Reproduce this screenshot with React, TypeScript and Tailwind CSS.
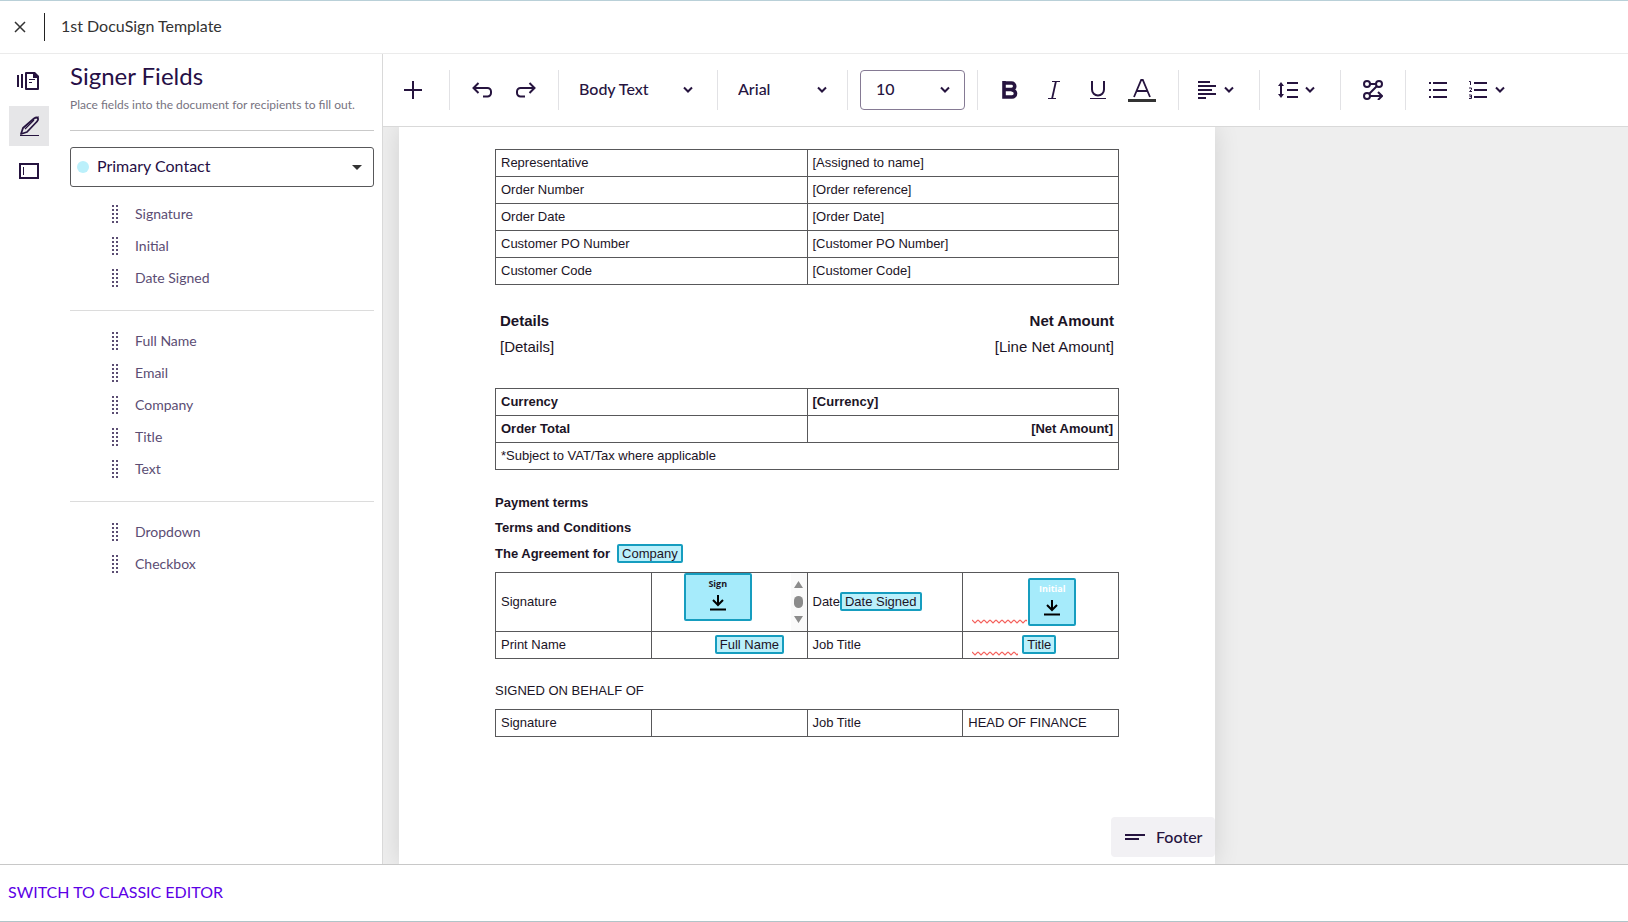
import clsx from "clsx";
import type { ReactNode } from "react";

const FIELD_GROUPS = [
  ["Signature", "Initial", "Date Signed"],
  ["Full Name", "Email", "Company", "Title", "Text"],
  ["Dropdown", "Checkbox"],
];

const ORDER_ROWS = [
  ["Representative", "[Assigned to name]"],
  ["Order Number", "[Order reference]"],
  ["Order Date", "[Order Date]"],
  ["Customer PO Number", "[Customer PO Number]"],
  ["Customer Code", "[Customer Code]"],
];

const CELL = "border border-[#58585a] px-[5px] py-0";

export default function App() {
  return (
    <div className="flex h-screen flex-col overflow-hidden border-t border-b border-t-[#b9d0d8] border-b-[#b0c4c8] bg-white font-['Lato',sans-serif] text-[#260559]">
      <Header />
      <div className="flex min-h-0 flex-1">
        <SideRail />
        <FieldsPanel />
        <main className="flex min-w-0 flex-1 flex-col border-l border-[#d9d9d9]">
          <Toolbar />
          <DocumentArea />
        </main>
      </div>
      <footer className="flex h-[57px] shrink-0 items-center border-t border-[#c8c8c8] px-2 pb-0.5">
        <a href="#classic" className="text-base text-[#5c00e6]">
          SWITCH TO CLASSIC EDITOR
        </a>
      </footer>
    </div>
  );
}

function Header() {
  return (
    <header className="flex h-[53px] shrink-0 items-center border-b border-[#ebebeb] text-[#333]">
      <button aria-label="Close" className="flex h-10 w-10 items-center justify-center">
        <svg width="12" height="12" viewBox="0 0 12 12" fill="none" stroke="currentColor" strokeWidth="1.5">
          <path d="M1 1l10 10M11 1L1 11" />
        </svg>
      </button>
      <div className="ml-1 h-7 w-px bg-[#222]" />
      <h1 className="ml-4 pb-0.5 text-base">1st DocuSign Template</h1>
    </header>
  );
}

function RailButton({ label, active = false, children }: { label: string; active?: boolean; children: ReactNode }) {
  return (
    <button
      aria-label={label}
      className={clsx("flex h-10 w-10 items-center justify-center", active && "bg-[#e6e6e8]")}
    >
      {children}
    </button>
  );
}

function SideRail() {
  return (
    <nav className="flex w-[58px] shrink-0 flex-col gap-[5px] pt-[7px] pl-[9px] text-[#26143f]">
      <RailButton label="Documents">
        <svg width="24" height="20" viewBox="0 0 24 20" fill="none" stroke="currentColor">
          <path d="M1 4v12M5 3v14" strokeWidth="2" />
          <path d="M18 2H9v16h12V6" strokeWidth="2" strokeLinejoin="round" />
          <path d="M16 1h2l4 4v2h-6z" fill="currentColor" stroke="none" />
          <path d="M12 8.500h6M12 11.500h3" />
        </svg>
      </RailButton>
      <RailButton label="Signer fields" active>
        <svg width="24" height="24" viewBox="0 0 24 24" fill="none" stroke="currentColor" strokeWidth="2">
          <path d="M4 20l2-6L17 4.500q3-2 4 0q.6 1.600-1 3L10 18z" strokeWidth="1.800" strokeLinejoin="round" />
          <path d="M8 15l9-9M20 4.500l1.500-2" strokeWidth="1.200" />
          <path d="M3 21.500h19" strokeWidth="1" />
        </svg>
      </RailButton>
      <RailButton label="Form fields">
        <svg width="20" height="16" viewBox="0 0 20 16" fill="none" stroke="currentColor">
          <rect x="1" y="1" width="18" height="14" strokeWidth="2" />
          <path d="M4.500 4v8" />
        </svg>
      </RailButton>
    </nav>
  );
}

function FieldsPanel() {
  return (
    <aside className="w-[324px] shrink-0 pr-2 pl-3">
      <h2 className="pt-[7px] text-2xl leading-[30px] text-[#260f46]">Signer Fields</h2>
      <p className="mt-1.5 text-xs leading-4 text-[#77737f]">Place fields into the document for recipients to fill out.</p>
      <hr className="mt-[17px] border-[#c9c9c9]" />
      <div className="relative mt-4">
        <select
          aria-label="Recipient"
          className="h-10 w-full appearance-none rounded-[3px] border border-[#58585a] bg-white pb-0.5 pl-[26px] text-base text-[#260f46]"
        >
          <option>Primary Contact</option>
        </select>
        <span className="pointer-events-none absolute top-[14px] left-[7px] h-3 w-3 rounded-full bg-[#bbf0fb]" />
        <svg className="pointer-events-none absolute top-[18px] right-3" width="10" height="5" viewBox="0 0 10 5">
          <path d="M0 0h10L5 5z" fill="#333" />
        </svg>
      </div>
      {FIELD_GROUPS.map((group, i) => (
        <ul key={i} className={clsx("pb-4", i === 0 ? "pt-[11px]" : "border-t border-[#dcdcdc] pt-[14px]")}>
          {group.map((field) => (
            <li key={field}>
              <button className="flex h-8 w-full items-center gap-[17px] pl-[42px] text-sm text-[#5b4d73]">
                <GripIcon />
                {field}
              </button>
            </li>
          ))}
        </ul>
      ))}
    </aside>
  );
}

function GripIcon() {
  return (
    <svg width="6" height="18" viewBox="0 0 6 18" fill="currentColor" shapeRendering="crispEdges">
      {[0, 4, 8, 12, 16].map((y) => (
        <path key={y} d={`M0 ${y}h2v2h-2zM4 ${y}h2v2h-2z`} />
      ))}
    </svg>
  );
}

function Chevron() {
  return (
    <svg
      className="pointer-events-none shrink-0"
      width="10"
      height="8"
      viewBox="0 0 10 8"
      fill="none"
      stroke="currentColor"
      strokeWidth="2"
    >
      <path d="M1 1.500l4 4 4-4" />
    </svg>
  );
}

function ToolGroup({ className, children }: { className: string; children: ReactNode }) {
  return (
    <div className={clsx("flex h-10 shrink-0 items-center border-r border-[#e2e2e5] last:border-r-0", className)}>
      {children}
    </div>
  );
}

function ToolButton({ label, className, children }: { label: string; className?: string; children: ReactNode }) {
  return (
    <button aria-label={label} className={clsx("flex h-10 items-center", className ?? "w-11 justify-center")}>
      {children}
    </button>
  );
}

function ToolSelect({ label, value, className }: { label: string; value: string; className: string }) {
  return (
    <div className={clsx("relative flex h-10 items-center", className)}>
      <select aria-label={label} className="h-full w-full appearance-none bg-transparent pb-0.5 font-medium">
        <option>{value}</option>
      </select>
      <div className="pointer-events-none absolute right-0 pr-[14px]">
        <Chevron />
      </div>
    </div>
  );
}

function Toolbar() {
  return (
    <div className="flex h-[73px] shrink-0 items-center border-b border-[#d9d9d9] text-base text-[#26143f]">
      <ToolGroup className="w-[67px] pl-2">
        <ToolButton label="Insert">
          <svg width="18" height="18" viewBox="0 0 18 18" stroke="currentColor" strokeWidth="2">
            <path d="M9 0v18M0 9h18" />
          </svg>
        </ToolButton>
      </ToolGroup>
      <ToolGroup className="w-[109px] pl-[10px]">
        <ToolButton label="Undo">
          <UndoIcon />
        </ToolButton>
        <ToolButton label="Redo">
          <UndoIcon className="-scale-x-100" />
        </ToolButton>
      </ToolGroup>
      <ToolGroup className="w-[159px] pl-5">
        <ToolSelect label="Paragraph style" value="Body Text" className="w-[128px]" />
      </ToolGroup>
      <ToolGroup className="w-[130px] pl-5">
        <ToolSelect label="Font" value="Arial" className="w-[103px]" />
      </ToolGroup>
      <ToolGroup className="w-[130px] pl-3">
        <ToolSelect label="Font size" value="10" className="w-[105px] rounded border border-[#857a94] pl-[15px]" />
      </ToolGroup>
      <ToolGroup className="w-[201px] pl-[10px]">
        <ToolButton label="Bold">
          <svg width="16" height="18" viewBox="0 0 16 18" fill="none" stroke="currentColor">
            <path d="M2 2h7.500a3.200 3.200 0 010 6.500H3M9.500 9h.5a3.400 3.400 0 010 7H2V0" strokeWidth="3.600" />
          </svg>
        </ToolButton>
        <ToolButton label="Italic">
          <svg width="12" height="18" viewBox="0 0 12 18" fill="none" stroke="currentColor">
            <path d="M4 .5h8M0 17.500h8" />
            <path d="M8 0L4 18" strokeWidth="1.800" />
          </svg>
        </ToolButton>
        <ToolButton label="Underline">
          <svg width="16" height="18" viewBox="0 0 16 18" fill="none" stroke="currentColor">
            <path d="M2 0v8.500a6 6 0 0012 0V0" strokeWidth="2" />
            <path d="M0 17.500h16" />
          </svg>
        </ToolButton>
        <ToolButton label="Text colour">
          <svg width="28" height="24" viewBox="0 0 28 24" fill="none" stroke="currentColor">
            <path d="M6 19L13.200 2h1.600L22 19M9 13h10" strokeWidth="1.800" />
            <path d="M0 22.500h28" stroke="#333" strokeWidth="3" />
          </svg>
        </ToolButton>
      </ToolGroup>
      <ToolGroup className="w-[81px] pl-[19px]">
        <ToolButton label="Alignment" className="gap-2">
          <svg width="18" height="18" viewBox="0 0 18 18" stroke="currentColor" strokeWidth="2">
            <path d="M0 1h12M0 5h18M0 9h14M0 13h18M0 17h8" />
          </svg>
          <Chevron />
        </ToolButton>
      </ToolGroup>
      <ToolGroup className="w-[81px] pl-[18px]">
        <ToolButton label="Line spacing" className="gap-[7px]">
          <svg width="20" height="18" viewBox="0 0 20 18" fill="none" stroke="currentColor" strokeWidth="2">
            <path d="M9 2h11M9 9h11M9 16h11" />
            <path d="M3 3v12" />
            <path d="M0 5L3 1l3 4zM0 13l3 4 3-4z" fill="currentColor" stroke="none" />
          </svg>
          <Chevron />
        </ToolButton>
      </ToolGroup>
      <ToolGroup className="w-[65px] pl-[10px]">
        <ToolButton label="Conditional rules">
          <svg width="20" height="20" viewBox="0 0 20 20" fill="none" stroke="currentColor" strokeWidth="2">
            <circle cx="4" cy="4" r="3" />
            <circle cx="16" cy="4" r="3" />
            <circle cx="4" cy="16" r="3" />
            <path d="M7 4h6M14 6L6 14M7 16h12M15 12l4 4-4 4" />
          </svg>
        </ToolButton>
      </ToolGroup>
      <ToolGroup className="gap-[22px] pl-[23px]">
        <ToolButton label="Bulleted list" className="pr-0">
          <svg width="18" height="18" viewBox="0 0 18 18" stroke="currentColor" strokeWidth="2">
            <path d="M4 2h14M4 9h14M4 16h14M0 2h2M0 9h2M0 16h2" />
          </svg>
        </ToolButton>
        <ToolButton label="Numbered list" className="gap-2">
          <svg width="18" height="18" viewBox="0 0 18 18" fill="none" stroke="currentColor">
            <path d="M5 2h13M5 9h13M5 16h13" strokeWidth="2" />
            <path d="M0 .5h1.500V4M0 7h2.500v1.500L.5 10.500H3M0 14h2.500v3.500H0M.5 15.700h2" />
          </svg>
          <Chevron />
        </ToolButton>
      </ToolGroup>
    </div>
  );
}

function UndoIcon({ className }: { className?: string }) {
  return (
    <svg
      className={className}
      width="20"
      height="16"
      viewBox="0 0 20 16"
      fill="none"
      stroke="currentColor"
      strokeWidth="2"
    >
      <path d="M6.500 1L1.500 6l5 5M2 6h13.500a3.500 3.500 0 013.500 3.500v1.500a3.500 3.500 0 01-3.500 3.500H11" />
    </svg>
  );
}

function FieldTag({ children }: { children: ReactNode }) {
  return (
    <button className="mb-0.5 h-[19px] rounded-[2px] border-2 border-[#169dbf] bg-[#bbf0fb] px-[3px] text-[13px] leading-[15px] font-normal">
      {children}
    </button>
  );
}

function SignTag({ label, className }: { label: string; className: string }) {
  return (
    <button
      className={clsx(
        "flex h-12 flex-col items-center rounded-[2px] border-2 border-[#169dbf] bg-[#a6ebfb] pt-[3px] font-['Open_Sans',sans-serif] text-[9px] leading-3 font-bold",
        className
      )}
    >
      {label}
      <svg className="mt-1" width="16" height="17" viewBox="0 0 16 17" fill="none" stroke="#000" strokeWidth="2">
        <path d="M8 1v10M3 6l5 5 5-5M0 15.500h16" />
      </svg>
    </button>
  );
}

function Squiggle({ width }: { width: number }) {
  return (
    <svg width={width} height="5" aria-hidden="true">
      <defs>
        <pattern id="squiggle" width="6" height="5" patternUnits="userSpaceOnUse">
          <path d="M0 1l3 3 3-3" fill="none" stroke="#f4615c" strokeWidth="1.200" />
        </pattern>
      </defs>
      <rect width={width} height="5" fill="url(#squiggle)" />
    </svg>
  );
}

function CellScrollbar() {
  return (
    <div className="flex h-full w-4 flex-col items-center justify-between bg-[#fafafa] py-2">
      <svg width="9" height="42" viewBox="0 0 9 42" fill="#8b8b8b">
        <path d="M4.500 0L9 7H0zM4.500 42L9 35H0z" />
        <rect y="15" width="9" height="12" rx="4.500" />
      </svg>
    </div>
  );
}

function DocumentArea() {
  return (
    <div className="min-h-0 flex-1 overflow-hidden bg-[#eee] pl-4">
      <article className="relative h-full w-[816px] bg-white px-24 pt-[22px] font-['Liberation_Sans',Arial,sans-serif] text-[13px] leading-5 text-[#1b1426] shadow-[0_0_24px_rgba(0,0,0,0.12)]">
        <table className="w-full table-fixed border-collapse">
          <tbody>
            {ORDER_ROWS.map(([name, value]) => (
              <tr key={name} className="h-[27px]">
                <td className={CELL}>{name}</td>
                <td className={CELL}>{value}</td>
              </tr>
            ))}
          </tbody>
        </table>

        <table className="mt-[23px] w-full table-fixed text-[15px]">
          <thead>
            <tr className="h-[26px]">
              <th className="px-[5px] py-0 text-left">Details</th>
              <th className="px-[5px] py-0 text-right">Net Amount</th>
            </tr>
          </thead>
          <tbody>
            <tr className="h-[26px]">
              <td className="px-[5px] py-0">[Details]</td>
              <td className="px-[5px] py-0 text-right">[Line Net Amount]</td>
            </tr>
          </tbody>
        </table>

        <table className="mt-7 w-full table-fixed border-collapse">
          <tbody>
            <tr className="h-[27px] font-bold">
              <td className={CELL}>Currency</td>
              <td className={CELL}>[Currency]</td>
            </tr>
            <tr className="h-[27px] font-bold">
              <td className={CELL}>Order Total</td>
              <td className={clsx(CELL, "text-right")}>[Net Amount]</td>
            </tr>
            <tr className="h-[27px]">
              <td className={CELL} colSpan={2}>
                *Subject to VAT/Tax where applicable
              </td>
            </tr>
          </tbody>
        </table>

        <div className="mt-5 font-bold">
          <p className="leading-[25px]">Payment terms</p>
          <p className="leading-[25px]">Terms and Conditions</p>
          <p className="flex h-7 items-center gap-[7px]">
            The Agreement for
            <FieldTag>Company</FieldTag>
          </p>
        </div>

        <table className="mt-1 w-full table-fixed border-collapse">
          <tbody>
            <tr className="h-[59px]">
              <td className={CELL}>Signature</td>
              <td className="border border-[#58585a] p-0">
                <div className="flex h-[58px] items-start justify-between pl-8">
                  <SignTag label="Sign" className="w-[68px]" />
                  <CellScrollbar />
                </div>
              </td>
              <td className={CELL}>
                <div className="flex items-center">
                  Date
                  <FieldTag>Date Signed</FieldTag>
                </div>
              </td>
              <td className={CELL}>
                <div className="flex items-end gap-px pl-1">
                  <div className="pb-0.5">
                    <Squiggle width={55} />
                  </div>
                  <SignTag label="Initial" className="w-12 text-white" />
                </div>
              </td>
            </tr>
            <tr className="h-[27px]">
              <td className={CELL}>Print Name</td>
              <td className={CELL}>
                <div className="flex pl-[58px]">
                  <FieldTag>Full Name</FieldTag>
                </div>
              </td>
              <td className={CELL}>Job Title</td>
              <td className={CELL}>
                <div className="flex items-end gap-1 pl-1">
                  <Squiggle width={46} />
                  <FieldTag>Title</FieldTag>
                </div>
              </td>
            </tr>
          </tbody>
        </table>

        <p className="mt-[22px]">SIGNED ON BEHALF OF</p>

        <table className="mt-2 w-full table-fixed border-collapse">
          <tbody>
            <tr className="h-[27px]">
              <td className={CELL}>Signature</td>
              <td className={CELL} />
              <td className={CELL}>Job Title</td>
              <td className={CELL}>HEAD OF FINANCE</td>
            </tr>
          </tbody>
        </table>

        <button className="absolute right-0 bottom-[7px] flex h-10 w-[104px] items-center gap-[11px] rounded bg-[#f2f1f4] pl-[14px] font-['Lato',sans-serif] text-base font-medium text-[#26143f]">
          <svg width="20" height="6" viewBox="0 0 20 6" stroke="currentColor" strokeWidth="2">
            <path d="M0 1h20M0 5h14" />
          </svg>
          Footer
        </button>
      </article>
    </div>
  );
}
